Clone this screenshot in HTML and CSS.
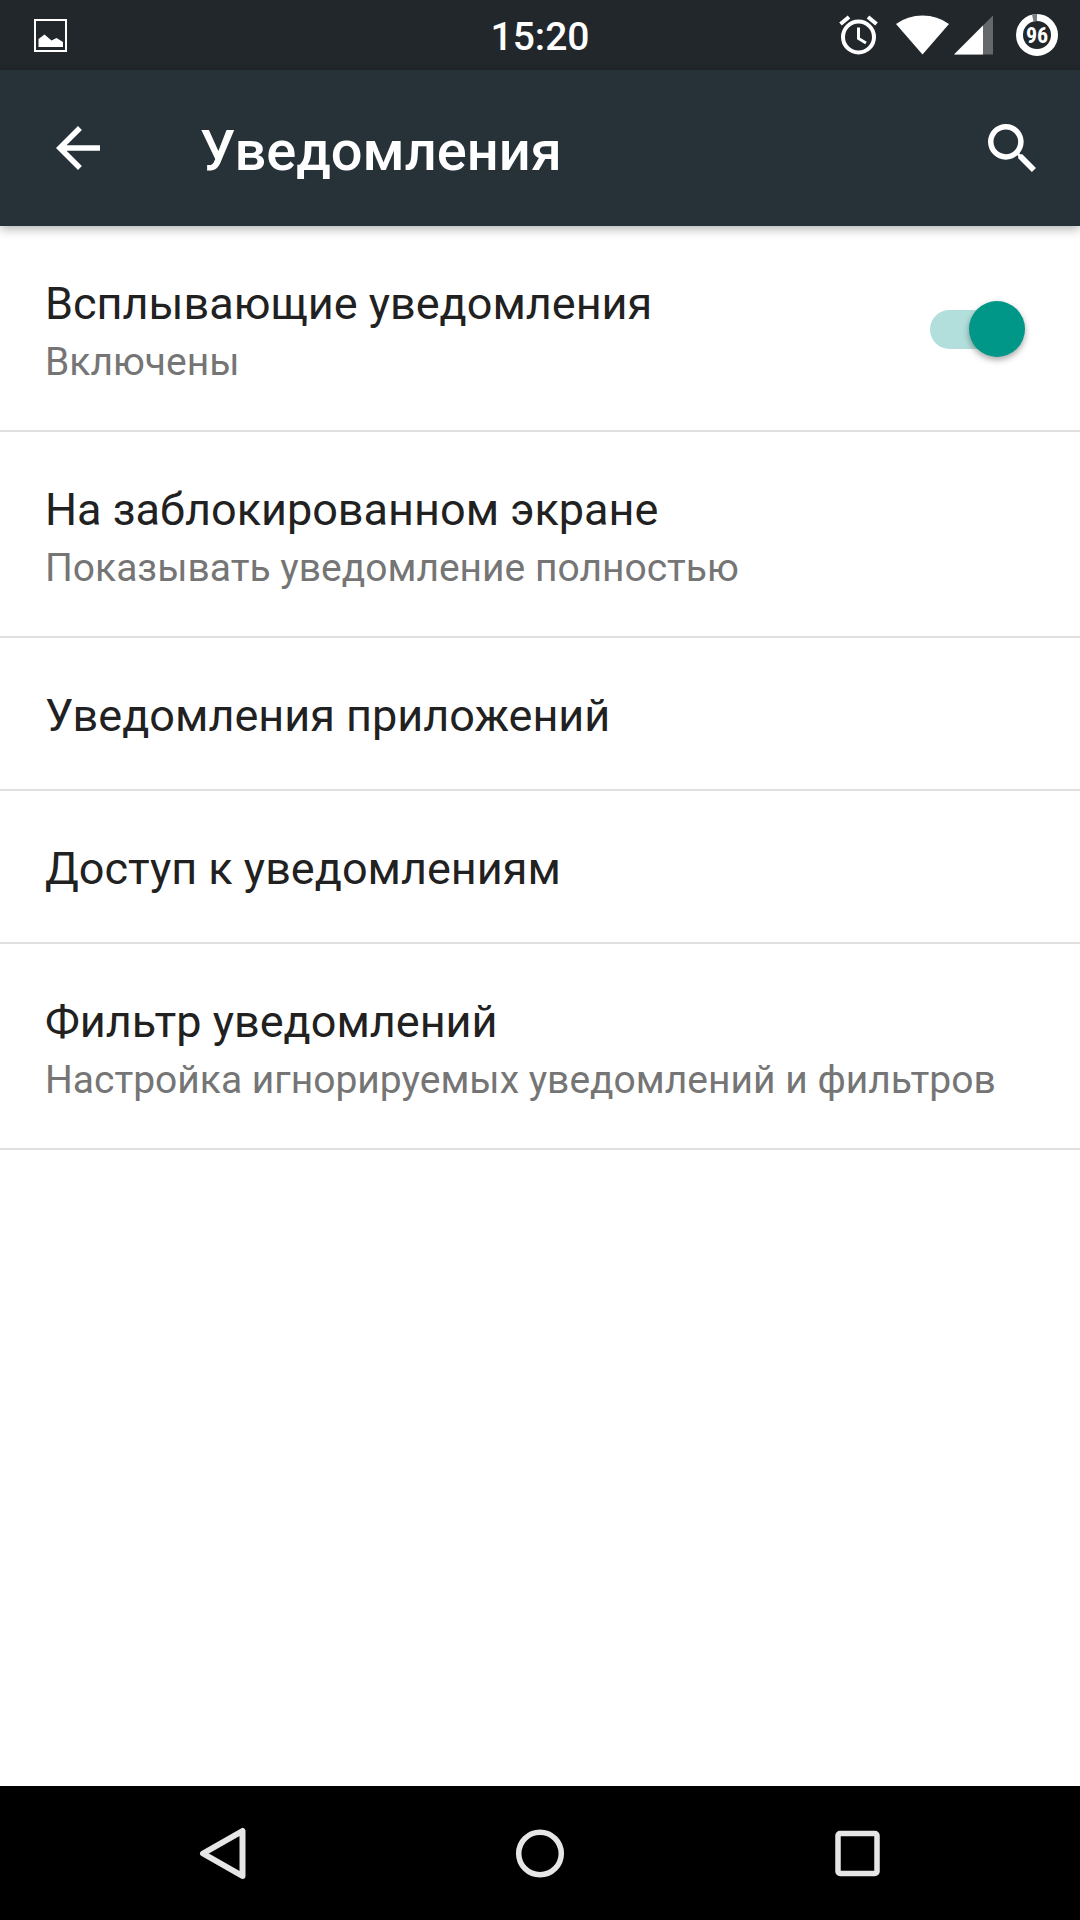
FILE: index.html
```html
<!DOCTYPE html>
<html lang="ru">

<head>
    <meta charset="UTF-8">
    <meta name="viewport" content="width=device-width, initial-scale=1.0">
    <title>Уведомления</title>
    <link rel="stylesheet" href="styles.css">
</head>

<body>
    <div class="status-bar">
        <div class="status-left">
            <svg width="33" height="33" viewBox="0 0 33 33">
                <rect x="1" y="1" width="31" height="31" fill="none" stroke="#fff" stroke-width="2" />
                <path d="M4.5 28V20L10.5 15.500L17.500 21.500L22.500 19L29 23V28Z" fill="#fff" />
            </svg>
        </div>
        <div class="clock">15:20</div>
        <div class="status-right">
            <!-- alarm -->
            <svg class="alarm" width="39" height="40" viewBox="0 0 39 40" fill="none" stroke="#fff">
                <circle cx="19.500" cy="22" r="15.500" stroke-width="4" />
                <path d="M19.500 12.500V23.500L27 28" stroke-width="3" />
                <path d="M1.500 9L10 2M37.500 9L29 2" stroke-width="4" />
            </svg>
            <!-- wifi -->
            <svg class="wifi" width="53" height="40" viewBox="0 0 53 40">
                <path d="M26.500 39.500L0 9Q11.500 0.500 26.500 0.500T53 9Z" fill="#fff" />
            </svg>
            <!-- signal -->
            <svg class="signal" width="39" height="40" viewBox="0 0 39 40">
                <path d="M0 39.500L39 0.500V39.500Z" fill="#66696b" />
                <path d="M0 39.500L29 10.500V39.500Z" fill="#fff" />
            </svg>
            <!-- battery -->
            <svg width="42" height="42" viewBox="0 0 42 42">
                <circle cx="21" cy="21" r="17.500" fill="none" stroke="#fff" stroke-width="7" />
                <path d="M16 0.500A21 21 0 0 1 21 0V7A14 14 0 0 0 17.500 7.500Z" fill="#7b7e80" />
                <text class="battery-text" x="21" y="29" text-anchor="middle">96</text>
            </svg>
        </div>
    </div>

    <header class="app-bar">
        <button type="button" class="icon-btn" aria-label="Назад">
            <svg width="44" height="44" viewBox="4 4 16 16">
                <path d="M20 11H7.830l5.590-5.590L12 4l-8 8 8 8 1.410-1.410L7.830 13H20v-2z" fill="#fff" />
            </svg>
        </button>
        <h1>Уведомления</h1>
        <button type="button" class="icon-btn" aria-label="Поиск">
            <svg width="48" height="48" viewBox="3 3 17.500 17.500">
                <path d="M15.500 14h-.79l-.28-.27C15.410 12.590 16 11.110 16 9.500 16 5.910 13.090 3 9.500 3S3 5.910 3 9.500 5.910 16 9.500 16c1.610 0 3.090-.59 4.230-1.570l.27.28v.79l5 4.990L20.490 19l-4.990-5zm-6 0C7.010 14 5 11.990 5 9.500S7.010 5 9.500 5 14 7.010 14 9.500 11.990 14 9.500 14z" fill="#fff" />
            </svg>
        </button>
    </header>

    <main class="settings">
        <label class="row" for="popup">
            <span class="row-text">
                <span class="row-title">Всплывающие уведомления</span>
                <span class="row-summary">Включены</span>
            </span>
            <input type="checkbox" id="popup" class="switch" checked>
        </label>
        <a class="row" href="#">
            <span class="row-text">
                <span class="row-title">На заблокированном экране</span>
                <span class="row-summary">Показывать уведомление полностью</span>
            </span>
        </a>
        <a class="row" href="#">
            <span class="row-title">Уведомления приложений</span>
        </a>
        <a class="row" href="#">
            <span class="row-title">Доступ к уведомлениям</span>
        </a>
        <a class="row" href="#">
            <span class="row-text">
                <span class="row-title">Фильтр уведомлений</span>
                <span class="row-summary">Настройка игнорируемых уведомлений и фильтров</span>
            </span>
        </a>
    </main>

    <nav class="nav-bar">
        <button type="button" class="icon-btn" aria-label="Назад">
            <svg width="52" height="52" viewBox="0 0 52 52" fill="none" stroke="#e6e6e6">
                <path d="M6 26.500L45.500 4V49Z" stroke-width="6" stroke-linejoin="round" />
            </svg>
        </button>
        <button type="button" class="icon-btn" aria-label="Домой">
            <svg width="52" height="52" viewBox="0 0 52 52" fill="none" stroke="#e6e6e6">
                <circle cx="26" cy="26.500" r="21.300" stroke-width="5.500" />
            </svg>
        </button>
        <button type="button" class="icon-btn" aria-label="Обзор">
            <svg width="52" height="52" viewBox="0 0 52 52" fill="none" stroke="#e6e6e6">
                <rect x="7" y="6.500" width="39" height="40" rx="2" stroke-width="5.500" />
            </svg>
        </button>
    </nav>
</body>

</html>
```

FILE: styles.css
```css
* {
    box-sizing: border-box;
}

body {
    margin: 0;
    min-height: 100vh;
    display: flex;
    flex-direction: column;
    background: #fff;
    font-family: Roboto, "Noto Sans", sans-serif;
}

svg {
    display: block;
}

.status-bar {
    display: grid;
    grid-template-columns: 1fr auto 1fr;
    align-items: center;
    height: 70px;
    padding: 0 22px;
    background: #22272b;
    color: #fff;
}

.status-left {
    padding-left: 12px;
}

.clock {
    padding-top: 4px;
    font-size: 39px;
    font-weight: 500;
    line-height: 48px;
}

.status-right {
    display: flex;
    justify-content: flex-end;
    align-items: center;
}

.alarm {
    margin-right: 18px;
}

.wifi {
    margin-right: 5px;
}

.signal {
    margin-right: 23px;
}

.battery-text {
    fill: #fff;
    font-family: "Roboto Condensed", "Liberation Sans Narrow", Roboto, sans-serif;
    font-size: 22px;
    font-weight: 700;
}

.app-bar {
    position: relative;
    display: flex;
    align-items: center;
    height: 156px;
    padding: 0 44px 0 56px;
    background: #263238;
    color: #fff;
    box-shadow: 0 3px 10px rgba(0, 0, 0, 0.3);
}

.app-bar h1 {
    flex: 1;
    margin: 0 0 0 100px;
    padding-top: 6px;
    font-size: 56px;
    font-weight: 500;
    line-height: 66px;
}

.icon-btn {
    padding: 0;
    border: 0;
    background: none;
    cursor: pointer;
}

.settings {
    flex: 1;
}

.row {
    display: flex;
    justify-content: space-between;
    min-height: 153px;
    padding: 50px 45px 40px;
    border-bottom: 2px solid #e0e0e0;
    color: #212121;
    text-decoration: none;
}

.row-title,
.row-summary {
    display: block;
    line-height: 56px;
}

.row-title {
    font-size: 45px;
}

.row-summary {
    margin-top: 2px;
    color: #757575;
    font-size: 39px;
}

/* switch */
.switch {
    appearance: none;
    position: relative;
    align-self: center;
    width: 95px;
    height: 56px;
    margin: 0 10px 8px 0;
    cursor: pointer;
}

.switch::before {
    content: "";
    position: absolute;
    top: 9px;
    left: 0;
    width: 86px;
    height: 39px;
    border-radius: 20px;
    background: #bdbdbd;
}

.switch::after {
    content: "";
    position: absolute;
    top: 0;
    left: 0;
    width: 56px;
    height: 56px;
    border-radius: 50%;
    background: #fafafa;
    box-shadow: 0 3px 6px rgba(0, 0, 0, 0.35);
}

.switch:checked::before {
    background: #b2dfdb;
}

.switch:checked::after {
    left: 39px;
    background: #009688;
}

.nav-bar {
    display: grid;
    grid-template-columns: repeat(3, 1fr);
    justify-items: center;
    align-items: center;
    height: 134px;
    padding: 0 6%;
    background: #000;
}
```
